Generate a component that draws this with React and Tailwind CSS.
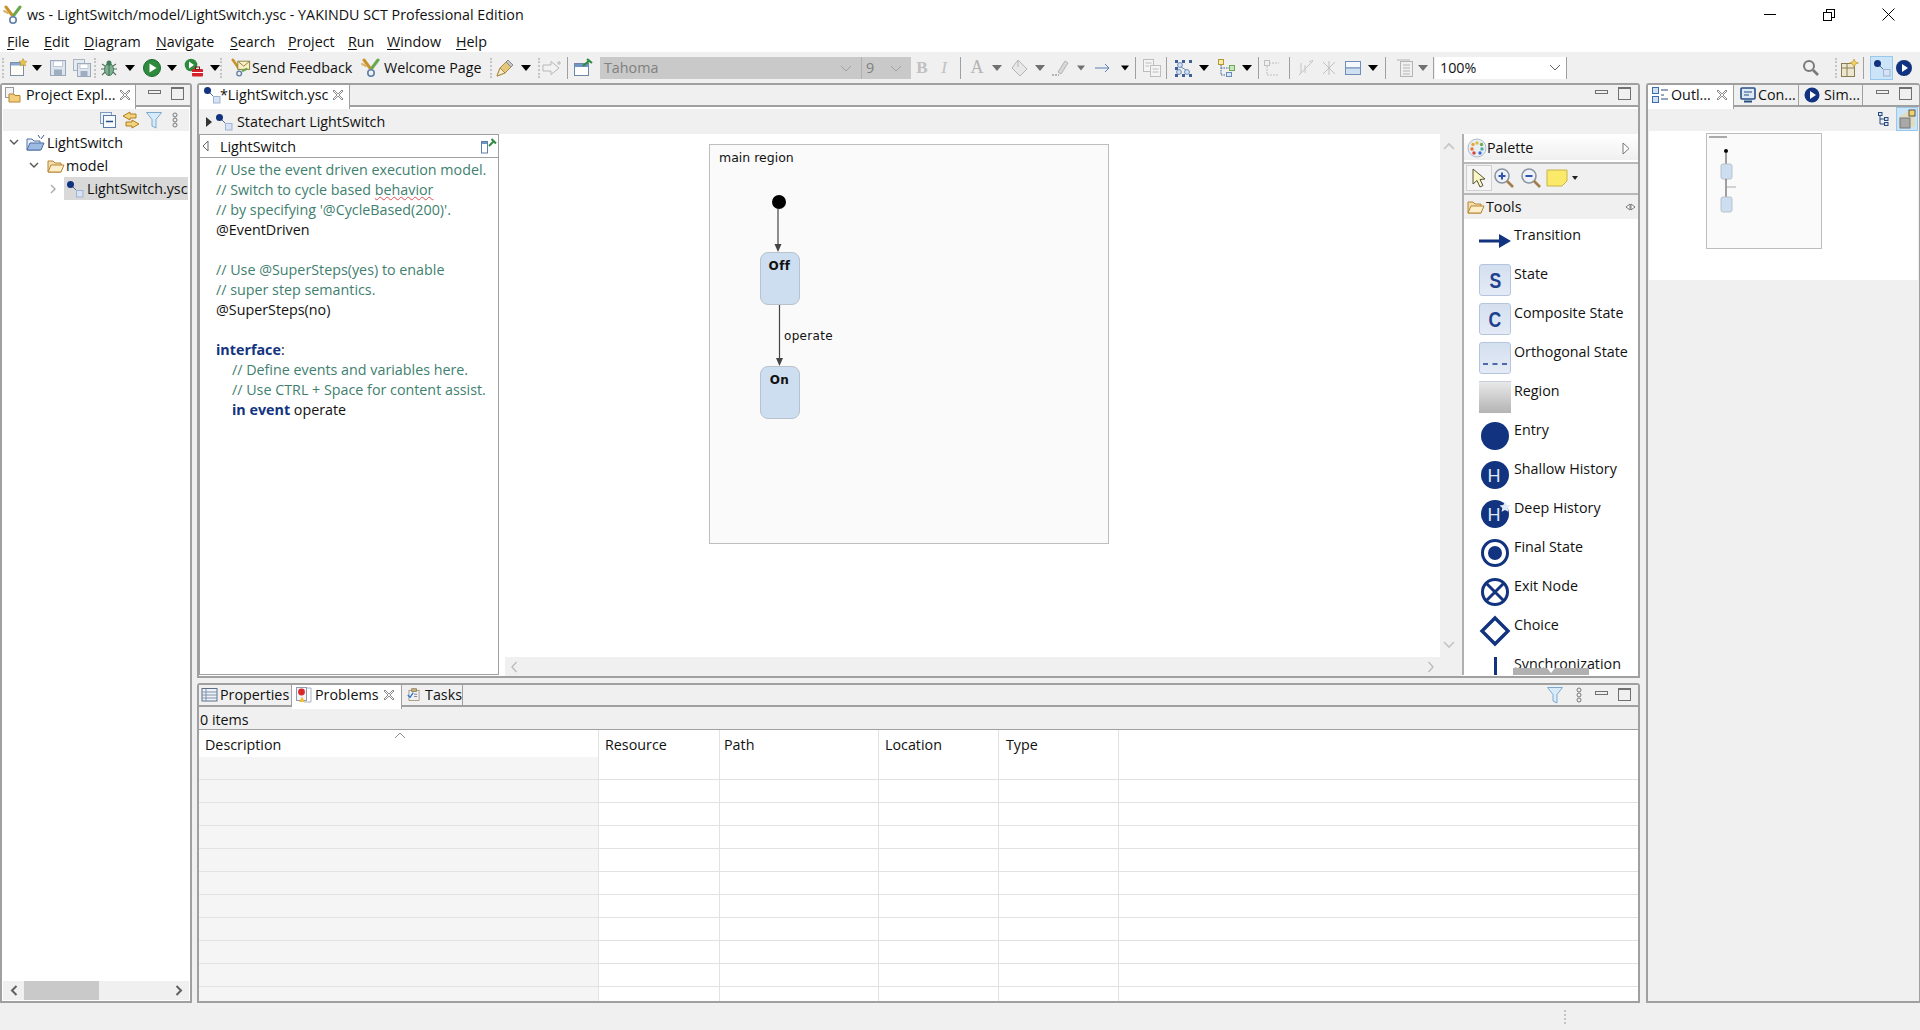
import React from "react";

const navy = "#12337f";

// small drawings used all over the workbench
const Logo = ({ size = 20 }) => (
  <svg width={size} height={size} viewBox="0 0 20 20">
    <path d="M3 2 L9 10" stroke="#c9932c" strokeWidth="3" strokeLinecap="round" />
    <path d="M17 2 L11 10" stroke="#6aa84f" strokeWidth="3" strokeLinecap="round" />
    <path d="M1 6 L5 8" stroke="#d9b36c" strokeWidth="2" strokeLinecap="round" />
    <circle cx="10" cy="15" r="3.2" fill="none" stroke="#5f7fa8" strokeWidth="1.6" />
  </svg>
);

const Ysc = ({ size = 18 }) => (
  <svg width={size} height={size} viewBox="0 0 18 18">
    <path d="M5 5 L12 12" stroke="#5a6a8a" strokeWidth="1" />
    <circle cx="4.5" cy="4.5" r="3.5" fill="#12337f" />
    <rect x="10.5" y="10.5" width="6.5" height="6.5" fill="#d7e3f4" stroke="#9fb4d0" />
  </svg>
);

const Arrow = ({ c = "#000" }) => (
  <svg width="10" height="6" viewBox="0 0 10 6">
    <path d="M0 0 H10 L5 6 Z" fill={c} />
  </svg>
);

const Grip = () => (
  <div className="w-[2px] h-[20px] border-l-2 border-dotted border-[#c4c4c4]" />
);

const Sep = () => <div className="w-px h-[22px] bg-[#a0a0a0]" />;

const Slot = ({ className, children }) => (
  <div className={"flex items-center justify-center shrink-0 h-full " + className}>{children}</div>
);

const NewIcon = () => (
  <svg width="20" height="20" viewBox="0 0 20 20">
    <rect x="2.5" y="4.5" width="13" height="13" fill="#fdfdf6" stroke="#7d8ea8" />
    <rect x="3" y="5" width="12" height="2.5" fill="#8aa7cf" />
    <path d="M15 0.5 L16.2 3 L19 3.4 L17 5.3 L17.5 8 L15 6.7 L12.5 8 L13 5.3 L11 3.4 L13.8 3 Z" fill="#e8c44c" stroke="#b48d23" strokeWidth=".5" />
  </svg>
);
const SaveIcon = () => (
  <svg width="18" height="20" viewBox="0 0 18 20">
    <rect x="1.5" y="2.5" width="15" height="15" fill="#dfe5ee" stroke="#9aa8bc" />
    <rect x="4.5" y="3" width="9" height="5.5" fill="#fff" stroke="#a9b5c6" strokeWidth=".7" />
    <rect x="5" y="11.5" width="8" height="5.5" fill="#9fadc0" />
  </svg>
);
const SaveAllIcon = () => (
  <svg width="20" height="20" viewBox="0 0 20 20">
    <rect x="1.5" y="1.5" width="11" height="11" fill="#e5e9f0" stroke="#a8b4c4" />
    <rect x="5.5" y="5.5" width="13" height="13" fill="#dfe5ee" stroke="#9aa8bc" />
    <rect x="8" y="6" width="8" height="4.5" fill="#fff" stroke="#a9b5c6" strokeWidth=".7" />
    <rect x="8.5" y="13" width="7" height="5" fill="#9fadc0" />
  </svg>
);
const BugIcon = () => (
  <svg width="20" height="20" viewBox="0 0 20 20">
    <path d="M3 6 L6 8 M17 6 L14 8 M2 11 H6 M18 11 H14 M3 17 L6 14 M17 17 L14 14" stroke="#5b6e5b" strokeWidth="1.1" />
    <ellipse cx="10" cy="11.5" rx="4.5" ry="6" fill="#7fb08f" stroke="#3f7a5a" />
    <circle cx="10" cy="5" r="2.5" fill="#3f7a5a" />
    <path d="M10 7 V17" stroke="#2f5f46" strokeWidth=".8" />
  </svg>
);
const RunIcon = () => (
  <svg width="20" height="20" viewBox="0 0 20 20">
    <circle cx="10" cy="10" r="8.5" fill="#2e8b3e" stroke="#1c6a2c" />
    <path d="M7.5 5.5 L14.5 10 L7.5 14.5 Z" fill="#fff" />
  </svg>
);
const ExtIcon = () => (
  <svg width="22" height="20" viewBox="0 0 22 20">
    <circle cx="7" cy="7" r="6.3" fill="#2e8b3e" />
    <path d="M5 3.5 L10 7 L5 10.5 Z" fill="#fff" />
    <rect x="8" y="11" width="11" height="7.5" rx="1" fill="#d6222a" />
    <rect x="11.5" y="9" width="4" height="2.5" fill="none" stroke="#8a1318" />
    <rect x="8" y="14" width="11" height="1" fill="#fff" />
  </svg>
);
const FeedbackIcon = () => (
  <svg width="22" height="20" viewBox="0 0 22 20">
    <path d="M2 1 L9 11" stroke="#c9932c" strokeWidth="3" strokeLinecap="round" />
    <circle cx="9" cy="16" r="2.6" fill="none" stroke="#5f7fa8" strokeWidth="1.5" />
    <rect x="7.5" y="2.5" width="13" height="9" fill="#f7f0c6" stroke="#8a7a3a" />
    <path d="M8 3 L14 8 L20 3" fill="none" stroke="#8a7a3a" />
    <path d="M13 13 L17 11" stroke="#6aa84f" strokeWidth="2.4" strokeLinecap="round" />
  </svg>
);
const PenIcon = () => (
  <svg width="20" height="20" viewBox="0 0 20 20">
    <path d="M2 18 L5 10 L13 2 L18 7 L10 15 Z" fill="#e6c77e" stroke="#a98a3f" />
    <path d="M5 10 L10 15 L2 18 Z" fill="#f6ead0" stroke="#a98a3f" />
    <path d="M13 2 L18 7 L16 9 L11 4 Z" fill="#c7c7c7" stroke="#8b8b8b" />
  </svg>
);
const ForwardIcon = () => (
  <svg width="22" height="20" viewBox="0 0 22 20">
    <path d="M2 7 H10 V3.5 L18 10 L10 16.5 V13 H2 Z" fill="#f2f2f2" stroke="#b7b7b7" />
    <path d="M18 3 V7 M16 5 H20" stroke="#b7b7b7" />
  </svg>
);
const EditorIcon = () => (
  <svg width="20" height="20" viewBox="0 0 20 20">
    <rect x="1.5" y="5.5" width="14" height="12" fill="#fff" stroke="#6f86a6" />
    <rect x="2" y="6" width="13" height="3" fill="#6f94c6" />
    <path d="M10 8 L17 2 M14 1 L19 5" stroke="#2f8a3f" strokeWidth="2.2" />
  </svg>
);
const PinPage = () => (
  <svg width="16" height="16" viewBox="0 0 16 16">
    <rect x=".5" y="3.5" width="6" height="11.5" fill="#fff" stroke="#5f7fa8" />
    <rect x="1" y="4" width="5" height="2" fill="#6f94c6" />
    <path d="M8 8 L13 3 M10.5 1 L15 5.5" stroke="#2f8a3f" strokeWidth="2" />
  </svg>
);
const SmallCopy = () => (
  <svg width="20" height="20" viewBox="0 0 20 20" fill="#f4f4f4" stroke="#bdbdbd">
    <rect x="1.5" y="1.5" width="10" height="12" />
    <rect x="8.5" y="7.5" width="10" height="11" />
    <path d="M3.5 5 H9.5 M3.5 8 H7 M10.5 11 H16.5 M10.5 14 H16.5" />
  </svg>
);
const LayoutIcon = () => (
  <svg width="20" height="20" viewBox="0 0 20 20">
    <path d="M2 2 h3 v3 h-3z M9 2 h3 v3 h-3z M16 2 h3 v3 h-3z M2 16 h3 v3 h-3z M9 16 h3 v3 h-3z M16 16 h3 v3 h-3z M2 9 h3 v3 h-3z" fill="#3d5f95" />
    <circle cx="7" cy="7" r="2.4" fill="#d6e3f3" stroke="#6a8abb" />
    <circle cx="6" cy="14" r="2.4" fill="#d6e3f3" stroke="#6a8abb" />
    <circle cx="14" cy="14" r="2.4" fill="#d6e3f3" stroke="#6a8abb" />
    <path d="M8 9 L13 12" stroke="#6a8abb" />
  </svg>
);
const TreeLayoutIcon = () => (
  <svg width="20" height="20" viewBox="0 0 20 20">
    <rect x="2.5" y="1.5" width="5" height="5" fill="#f7ecb0" stroke="#b8962b" />
    <rect x="13.5" y="7.5" width="5" height="5" fill="#c9e7b7" stroke="#6fa857" />
    <rect x="10.5" y="14.5" width="5" height="4" fill="#d9e6f5" stroke="#6a8abb" />
    <path d="M5 7 V17 H10 M5 10 H13" stroke="#3d5f95" strokeDasharray="1.5 1" fill="none" />
  </svg>
);

const MinMax = ({ gap = "ml-[10px]" }) => (
  <div className="flex items-start">
    <div className="w-[13px] h-[4px] border border-[#707070] mt-[5px]" />
    <div className={"w-[13px] h-[13px] border border-[#707070] border-t-2 mt-[2px] " + gap} />
  </div>
);

const CloseX = () => (
  <svg width="12" height="12" viewBox="0 0 12 12" fill="none" stroke="#8c8c8c">
    <path d="M2 1 L6 5 L10 1 L11 2 L7 6 L11 10 L10 11 L6 7 L2 11 L1 10 L5 6 L1 2 Z" />
  </svg>
);

const Chain = () => (
  <svg width="8" height="16" viewBox="0 0 8 16" fill="none" stroke="#777">
    <circle cx="4" cy="3" r="2" />
    <circle cx="4" cy="8" r="2" />
    <circle cx="4" cy="13" r="2" />
  </svg>
);

const Funnel = () => (
  <svg width="18" height="18" viewBox="0 0 18 18">
    <path d="M1.5 1.5 H16.5 L11 8.5 V17 L7 15 V8.5 Z" fill="#d8ebfa" stroke="#7ea9cf" />
  </svg>
);

const Folder = ({ color = "#b88432" }) => (
  <svg width="18" height="16" viewBox="0 0 18 16">
    <path d="M1 3 H6 L8 5 H14 V14 H1 Z" fill="#f3dfae" stroke={color} />
    <path d="M1 14 L4 7 H17 L14 14 Z" fill="#fbeecb" stroke={color} />
  </svg>
);

const Tab = ({ w, active, children }) => (
  <div
    className={
      "flex items-center shrink-0 border-r border-[#a0a0a0] whitespace-nowrap " +
      (active ? "bg-white -mb-[2px] h-[24px] pb-[4px] z-10 " : "h-[22px] pb-[2px] ") +
      w
    }
  >
    {children}
  </div>
);

function Toolbar() {
  return (
    <div className="h-[31px] flex items-center bg-[#f0f0f0] shrink-0">
      <Slot className="w-[5px]"><Grip /></Slot>
      <Slot className="w-[25px]"><NewIcon /></Slot>
      <Slot className="w-[14px]"><Arrow /></Slot>
      <Slot className="w-[28px]"><SaveIcon /></Slot>
      <Slot className="w-[20px]"><SaveAllIcon /></Slot>
      <Slot className="w-[6px]"><Grip /></Slot>
      <Slot className="w-[22px]"><BugIcon /></Slot>
      <Slot className="w-[20px]"><Arrow /></Slot>
      <Slot className="w-[24px]"><RunIcon /></Slot>
      <Slot className="w-[16px]"><Arrow /></Slot>
      <Slot className="w-[30px]"><ExtIcon /></Slot>
      <Slot className="w-[10px]"><Arrow /></Slot>
      <Slot className="w-[2px]"><Grip /></Slot>
      <Slot className="w-[20px] ml-[9px]"><FeedbackIcon /></Slot>
      <div className="w-[100px] ml-[1px] pt-[1px] whitespace-nowrap">Send Feedback</div>
      <Slot className="w-[20px] ml-[9px]"><Logo /></Slot>
      <div className="w-[97px] ml-[3px] pt-[1px] whitespace-nowrap">Welcome Page</div>
      <Slot className="w-[4px] ml-[8px]"><Grip /></Slot>
      <Slot className="w-[20px] ml-[2px]"><PenIcon /></Slot>
      <Slot className="w-[22px]"><Arrow /></Slot>
      <Slot className="w-[4px]"><Grip /></Slot>
      <Slot className="w-[22px]"><ForwardIcon /></Slot>
      <Slot className="w-[8px]"><Sep /></Slot>
      <Slot className="w-[24px]"><EditorIcon /></Slot>
      <div className="ml-[5px] w-[262px] h-[22px] bg-[#c9c9c9] flex items-center justify-between pl-[4px] pr-[9px] pt-[1px] text-[#808080] border-r border-[#b0b0b0]">
        <span>Tahoma</span>
        <svg width="12" height="7" viewBox="0 0 12 7" fill="none" stroke="#a0a0a0"><path d="M1 1 L6 6 L11 1" /></svg>
      </div>
      <div className="w-[49px] h-[22px] bg-[#c9c9c9] flex items-center justify-between pl-[4px] pr-[9px] pt-[1px] text-[#808080]">
        <span>9</span>
        <svg width="12" height="7" viewBox="0 0 12 7" fill="none" stroke="#a0a0a0"><path d="M1 1 L6 6 L11 1" /></svg>
      </div>
      <Slot className="w-[22px] font-['Liberation_Serif',serif] font-bold text-[17px] text-[#c0c0c0]">B</Slot>
      <Slot className="w-[22px] font-['Liberation_Serif',serif] italic text-[17px] text-[#c0c0c0]">I</Slot>
      <Slot className="w-[10px]"><Sep /></Slot>
      <Slot className="w-[24px] font-['Liberation_Serif',serif] text-[18px] text-[#b4b4b4]">A</Slot>
      <Slot className="w-[16px]"><Arrow c="#707070" /></Slot>
      <Slot className="w-[30px]">
        <svg width="20" height="20" viewBox="0 0 20 20"><path d="M8 2 L17 11 L10 18 L2 10 Z" fill="#e8e8e8" stroke="#b4b4b4" /><path d="M8 2 V9" stroke="#b4b4b4" /></svg>
      </Slot>
      <Slot className="w-[10px]"><Arrow c="#707070" /></Slot>
      <Slot className="w-[32px]">
        <svg width="20" height="20" viewBox="0 0 20 20"><path d="M7 14 L14 3 L17 5 L10 16 Z" fill="#d8d8d8" stroke="#b4b4b4" /><path d="M1 17 H8" stroke="#b4b4b4" strokeDasharray="2 1" strokeWidth="2" /></svg>
      </Slot>
      <Slot className="w-[8px]"><Arrow c="#707070" /></Slot>
      <Slot className="w-[36px]">
        <svg width="16" height="10" viewBox="0 0 16 10" fill="none" stroke="#5a7fb0"><path d="M0 5 H14 M10 1 L14 5 L10 9" /></svg>
      </Slot>
      <Slot className="w-[8px]"><Arrow /></Slot>
      <Slot className="w-[12px]"><Sep /></Slot>
      <Slot className="w-[22px]"><SmallCopy /></Slot>
      <Slot className="w-[6px]"><Sep /></Slot>
      <Slot className="w-[28px]"><LayoutIcon /></Slot>
      <Slot className="w-[14px]"><Arrow /></Slot>
      <Slot className="w-[30px]"><TreeLayoutIcon /></Slot>
      <Slot className="w-[12px]"><Arrow /></Slot>
      <Slot className="w-[10px]"><Sep /></Slot>
      <Slot className="w-[18px]">
        <svg width="18" height="18" viewBox="0 0 18 18" fill="none" stroke="#c0c0c0"><rect x="1.5" y="1.5" width="5" height="5" /><path d="M6 4 H16 M4 7 V16 H16" strokeDasharray="2 1" /></svg>
      </Slot>
      <Slot className="w-[16px]"><Sep /></Slot>
      <Slot className="w-[18px]">
        <svg width="18" height="18" viewBox="0 0 18 18" fill="none" stroke="#c4c4c4"><path d="M4 4 V14 M8 6 V14 M12 3 L16 1 M2 16 L16 2" /></svg>
      </Slot>
      <Slot className="w-[28px]">
        <svg width="18" height="18" viewBox="0 0 18 18" fill="none" stroke="#c0c0c0"><path d="M3 3 L15 15 M15 3 L3 15 M9 2 V16" /></svg>
      </Slot>
      <Slot className="w-[20px]">
        <svg width="18" height="18" viewBox="0 0 18 18"><rect x="1.5" y="2.5" width="15" height="6.5" fill="#f5f8fc" stroke="#6f8db5" /><rect x="1.5" y="9" width="15" height="6.5" fill="#cfe0f2" stroke="#6f8db5" /></svg>
      </Slot>
      <Slot className="w-[20px]"><Arrow /></Slot>
      <Slot className="w-[4px]"><Sep /></Slot>
      <Slot className="w-[20px] ml-[8px]">
        <svg width="18" height="20" viewBox="0 0 18 20" fill="none" stroke="#b4b4b4"><rect x="4.5" y="3.5" width="12" height="15" fill="#f0f0f0" /><path d="M1 2 H14 M7 7 H14 M7 10 H14 M7 13 H14 M7 16 H14" /></svg>
      </Slot>
      <Slot className="w-[16px]"><Arrow c="#707070" /></Slot>
      <Slot className="w-[4px]"><Sep /></Slot>
      <div className="w-[132px] h-[22px] bg-white flex items-center justify-between pl-[5px] pr-[5px] border-r border-[#a0a0a0]">
        <span>100%</span>
        <svg width="12" height="7" viewBox="0 0 12 7" fill="none" stroke="#606060"><path d="M1 1 L6 6 L11 1" /></svg>
      </div>
      <div className="ml-auto flex items-center h-full">
        <Slot className="w-[24px]">
          <svg width="18" height="18" viewBox="0 0 18 18" fill="none" stroke="#7a7a7a"><circle cx="7" cy="7" r="5" strokeWidth="2" /><path d="M11 11 L16 16" strokeWidth="2.6" /></svg>
        </Slot>
        <Slot className="w-[4px] ml-[11px]"><Grip /></Slot>
        <Slot className="w-[20px] ml-[1px]">
          <svg width="20" height="20" viewBox="0 0 20 20"><rect x="2.5" y="5.5" width="13" height="13" fill="#eee7cf" stroke="#8a7d55" /><path d="M2.5 10 H15.5 M8 5.5 V18.5" stroke="#8a7d55" /><path d="M15 1 L16.5 4 L19.5 5 L16.5 6 L15 9 L13.5 6 L10.5 5 L13.5 4 Z" fill="#f3d26c" stroke="#b48d23" strokeWidth=".6" /></svg>
        </Slot>
        <div className="w-px h-[22px] bg-[#a0a0a0] ml-[4px]" />
        <div className="w-[23px] h-[24px] ml-[6px] bg-[#cce4f7] border border-[#99c8ee] flex items-center justify-center"><Ysc /></div>
        <Slot className="w-[20px] ml-[1px]">
          <svg width="18" height="18" viewBox="0 0 18 18"><circle cx="9" cy="9" r="8" fill={navy} /><path d="M7 5 L13 9 L7 13 Z" fill="#fff" /></svg>
        </Slot>
        <div className="w-[6px]" />
      </div>
    </div>
  );
}

function ProjectExplorer() {
  return (
    <div className="w-[192px] shrink-0 h-full border-2 border-[#a0a0a0] rounded-t-[3px] bg-white flex flex-col">
      <div className="h-[22px] shrink-0 flex bg-[#f0f0f0] border-b-2 border-[#a0a0a0]">
        <Tab w="w-[134px] pl-[2px]" active>
          <svg width="18" height="18" viewBox="0 0 18 18"><rect x="1.5" y="1.5" width="8" height="10" fill="#f4f4f4" stroke="#999" /><path d="M5 8 H10 L11 9.5 H16 V16 H5 Z" fill="#f3cf7c" stroke="#b88432" /></svg>
          <span className="ml-[4px]">Project Expl...</span>
          <span className="ml-[4px]"><CloseX /></span>
        </Tab>
        <div className="pl-[12px]"><MinMax /></div>
      </div>
      <div className="h-[22px] shrink-0 mt-[2px] mx-px bg-[#f0f0f0] flex items-center pl-[96px]">
        <svg width="18" height="18" viewBox="0 0 18 18"><rect x="1.5" y="1.5" width="11" height="11" fill="#eaf1f9" stroke="#7f9cc0" /><rect x="4.5" y="4.5" width="12" height="12" fill="#f7fafd" stroke="#587aa6" /><path d="M7 10.5 H14" stroke="#264f86" strokeWidth="1.5" /></svg>
        <svg className="ml-[5px]" width="18" height="18" viewBox="0 0 18 18" fill="#f3d37c" stroke="#b07f1e"><path d="M8 1 L1 5 L8 9 V7 H14 V3 H8 Z" /><path d="M10 9 L17 13 L10 17 V15 H4 V11 H10 Z" /></svg>
        <span className="ml-[5px]"><Funnel /></span>
        <span className="ml-[8px]"><Chain /></span>
      </div>
      <div className="flex-1">
        <div className="h-[23px] flex items-center pl-[7px]">
          <svg width="10" height="7" viewBox="0 0 10 7" fill="none" stroke="#555" strokeWidth="1.4"><path d="M1 1 L5 5 L9 1" /></svg>
          <span className="ml-[7px]">
            <svg width="20" height="18" viewBox="0 0 20 18"><path d="M1 5 H6 L8 7 H14 V16 H1 Z" fill="#e9eff8" stroke="#4d6ea3" /><path d="M1 16 L4 9 H18 L15 16 Z" fill="#9dbbe2" stroke="#4d6ea3" /><path d="M12 1 L14 4 M18 1 L15 5" stroke="#3c5a8c" /></svg>
          </span>
          <span className="ml-[1px]">LightSwitch</span>
        </div>
        <div className="h-[23px] flex items-center pl-[27px]">
          <svg width="10" height="7" viewBox="0 0 10 7" fill="none" stroke="#555" strokeWidth="1.4"><path d="M1 1 L5 5 L9 1" /></svg>
          <span className="ml-[8px]"><Folder /></span>
          <span className="ml-[1px]">model</span>
        </div>
        <div className="h-[23px] flex items-center pl-[48px]">
          <svg width="7" height="10" viewBox="0 0 7 10" fill="none" stroke="#aaa" strokeWidth="1.4"><path d="M1 1 L5 5 L1 9" /></svg>
          <div className="ml-[7px] h-full w-[124px] bg-[#d9d9d9] flex items-center pl-[2px] overflow-hidden">
            <Ysc />
            <span className="ml-[3px] whitespace-nowrap">LightSwitch.ysc</span>
          </div>
        </div>
      </div>
      <div className="h-[19px] shrink-0 mb-[1px] mx-px bg-[#f0f0f0] flex items-center">
        <div className="w-[21px] flex justify-center">
          <svg width="8" height="11" viewBox="0 0 8 11" fill="none" stroke="#606060" strokeWidth="2"><path d="M6.5 1 L2 5.5 L6.5 10" /></svg>
        </div>
        <div className="w-[75px] h-full bg-[#c9c9c9]" />
        <div className="ml-auto w-[21px] flex justify-center">
          <svg width="8" height="11" viewBox="0 0 8 11" fill="none" stroke="#606060" strokeWidth="2"><path d="M1.5 1 L6 5.5 L1.5 10" /></svg>
        </div>
      </div>
    </div>
  );
}

const defLines = [
  { c: "// Use the event driven execution model." },
  { c: "// Switch to cycle based ", sq: "behavior" },
  { c: "// by specifying '@CycleBased(200)'." },
  { t: "@EventDriven" },
  {},
  { c: "// Use @SuperSteps(yes) to enable" },
  { c: "// super step semantics." },
  { t: "@SuperSteps(no)" },
  {},
  { k: "interface", t: ":" },
  { c: "// Define events and variables here.", i: true },
  { c: "// Use CTRL + Space for content assist.", i: true },
  { k: "in event", t: " operate", i: true },
];

function Definition() {
  return (
    <div className="w-[300px] shrink-0 h-[541px] border border-[#a0a0a0] bg-white flex flex-col">
      <div className="h-[23px] shrink-0 border-b border-[#a0a0a0] flex items-center pl-[2px] pr-[1px]">
        <svg width="7" height="12" viewBox="0 0 7 12" fill="#fff" stroke="#666"><path d="M6 1 L1 6 L6 11 Z" /></svg>
        <span className="ml-[11px] pt-[2px]">LightSwitch</span>
        <span className="ml-auto"><PinPage /></span>
      </div>
      <div className="pl-[16px] pt-[2px] whitespace-pre">
        {defLines.map((l, i) => (
          <div key={i} className={"h-[20px] leading-[20px] " + (l.i ? "pl-[16px]" : "")}>
            {l.c && <span className="text-[#3f7f6f]">{l.c}</span>}
            {l.sq && <span className="text-[#3f7f6f] underline decoration-wavy decoration-[#e05050] decoration-1">{l.sq}</span>}
            {l.k && <span className="text-[#12337f] font-bold">{l.k}</span>}
            {l.t && <span>{l.t}</span>}
          </div>
        ))}
      </div>
    </div>
  );
}

function Diagram() {
  const state = "absolute w-[40px] h-[53px] rounded-[8px] bg-[#cddef0] border border-[#b8c2cc] text-center pr-[1px] font-bold text-[12px] leading-[26px] font-['DejaVu_Sans',sans-serif] tracking-[.4px]";
  return (
    <div className="relative flex-1 bg-white">
      {/* free canvas: offsets are relative to the canvas corner */}
      <div className="absolute left-[210px] top-[10px] w-[400px] h-[400px] bg-[#fafafa] border border-[#bdbdbd] font-['DejaVu_Sans',sans-serif] text-[12.5px]">
        <span className="absolute left-[9px] top-[4px] whitespace-nowrap">main region</span>
        <svg className="absolute left-0 top-0" width="398" height="398">
          <circle cx="69" cy="57" r="7" fill="#000" />
          <path d="M68 64 V100" stroke="#444" strokeWidth="1.2" />
          <path d="M64.5 99 H71.5 L68 107 Z" fill="#444" />
          <path d="M69.5 159 V214" stroke="#444" strokeWidth="1.2" />
          <path d="M66 213 H73 L69.5 221 Z" fill="#444" />
        </svg>
        <div className={state + " left-[50px] top-[107px]"}>Off</div>
        <div className={state + " left-[50px] top-[221px]"}>On</div>
        <span className="absolute left-[74px] top-[182px] text-[12px] tracking-[.3px] whitespace-nowrap">operate</span>
      </div>
    </div>
  );
}

function PaletteIcon({ name }) {
  const box = "w-[32px] h-[32px] rounded-[3px] border border-[#b5c5dd] bg-linear-to-b from-[#d4dfef] to-[#e4ebf6] flex items-center justify-center font-['Liberation_Sans',sans-serif] font-bold text-[22px] text-[#1f3f8f]";
  switch (name) {
    case "Transition":
      return (
        <svg width="32" height="32" viewBox="0 0 32 32"><path d="M0 14.5 H20 V9 L32 16 L20 23 V17.5 H0 Z" fill={navy} /></svg>
      );
    case "State":
      return <div className={box}><span className="scale-x-[.8]">S</span></div>;
    case "Composite State":
      return <div className={box}><span className="scale-x-[.8]">C</span></div>;
    case "Orthogonal State":
      return (
        <div className={box}>
          <svg width="24" height="4" viewBox="0 0 24 4" className="mt-[12px]"><path d="M0 2 H24" stroke="#1f3f8f" strokeWidth="1.6" strokeDasharray="5 4.5" /></svg>
        </div>
      );
    case "Region":
      return <div className="w-[32px] h-[32px] bg-linear-to-b from-[#e8e8e8] to-[#b4b4b4] border-t border-[#c5cede]" />;
    case "Entry":
      return <svg width="32" height="32"><circle cx="16" cy="16" r="14" fill={navy} /></svg>;
    case "Shallow History":
    case "Deep History":
      return (
        <svg width="32" height="32">
          <circle cx="16" cy="16" r="14" fill={navy} />
          <text x="15" y="22.5" textAnchor="middle" fill="#dfe8f5" fontSize="18" fontWeight="400" fontFamily="Liberation Sans">H</text>
          {name === "Deep History" && <path d="M26 3.5 L27.7 7 L31.5 7.5 L28.7 10 L29.4 13.7 L26 12 L22.6 13.7 L23.3 10 L20.5 7.5 L24.3 7 Z" fill="#dfe8f5" />}
        </svg>
      );
    case "Final State":
      return (
        <svg width="32" height="32" fill="none"><circle cx="16" cy="16" r="12.5" stroke={navy} strokeWidth="3" /><circle cx="16" cy="16" r="7" fill={navy} /></svg>
      );
    case "Exit Node":
      return (
        <svg width="32" height="32" fill="none" stroke={navy} strokeWidth="3"><circle cx="16" cy="16" r="12.5" /><path d="M7 7 L25 25 M25 7 L7 25" /></svg>
      );
    case "Choice":
      return (
        <svg width="32" height="32" fill="none" stroke={navy} strokeWidth="3.4"><path d="M16 3 L29 16 L16 29 L3 16 Z" /></svg>
      );
    default:
      return <div className="w-[3px] h-[20px] bg-[#12337f] mx-auto mt-[3px]" />;
  }
}

const tools = ["Transition", "State", "Composite State", "Orthogonal State", "Region", "Entry", "Shallow History", "Deep History", "Final State", "Exit Node", "Choice", "Synchronization"];

function Palette() {
  return (
    <div className="w-[176px] shrink-0 h-[541px] bg-white border-l-2 border-[#b0b0b0] flex flex-col relative overflow-hidden">
      <div className="h-[26px] shrink-0 pt-[2px] bg-linear-to-b from-white to-[#f0f0f0] flex items-center pl-[3px] pr-[8px]">
        <svg width="20" height="20" viewBox="0 0 20 20">
          <circle cx="10" cy="10" r="9" fill="#e8eef6" stroke="#aeb9c8" />
          <circle cx="6" cy="6.5" r="1.7" fill="#e8a33a" /><circle cx="10" cy="5" r="1.7" fill="#d9c23a" /><circle cx="14.5" cy="6.5" r="1.7" fill="#6fae4a" />
          <circle cx="5" cy="11" r="1.7" fill="#e8742a" /><circle cx="15" cy="11" r="1.7" fill="#4ab0a0" />
          <circle cx="7" cy="15" r="1.7" fill="#d8403a" /><circle cx="13" cy="15" r="1.7" fill="#3a6fd8" />
        </svg>
        <span className="ml-[0px]">Palette</span>
        <svg className="ml-auto" width="8" height="13" viewBox="0 0 8 13" fill="#fff" stroke="#777"><path d="M1 1 L7 6.5 L1 12 Z" /></svg>
      </div>
      <div className="h-[33px] shrink-0 mt-[2px] bg-[#f0f0f0] border-y-2 border-[#b8b8b8] flex items-center pl-[2px] pb-[1px]">
        <div className="w-[26px] h-[26px] bg-[#f5f5f5] border border-[#d0d0d0] flex items-center justify-center">
          <svg width="16" height="20" viewBox="0 0 16 20"><path d="M2 1 V16 L6 12.5 L9 19 L12 17.5 L9 11.5 L14 11 Z" fill="#fbf6c4" stroke="#55553a" /></svg>
        </div>
        <svg className="ml-[1px]" width="22" height="22" viewBox="0 0 22 22" fill="none"><circle cx="9" cy="9" r="7" fill="#eef2f8" stroke="#8a94a3" strokeWidth="1.6" /><path d="M5.5 9 H12.5 M9 5.5 V12.5" stroke="#2f54b0" strokeWidth="2" /><path d="M14 14 L20 20" stroke="#a57d4a" strokeWidth="2.6" /></svg>
        <svg className="ml-[5px]" width="22" height="22" viewBox="0 0 22 22" fill="none"><circle cx="9" cy="9" r="7" fill="#eef2f8" stroke="#8a94a3" strokeWidth="1.6" /><path d="M5.5 9 H12.5" stroke="#2f54b0" strokeWidth="2" /><path d="M14 14 L20 20" stroke="#a57d4a" strokeWidth="2.6" /></svg>
        <svg className="ml-[4px]" width="22" height="18" viewBox="0 0 22 18"><path d="M1 1 H21 V12 L16 17 H1 Z" fill="#fbe96a" stroke="#c7b44a" /></svg>
        <svg className="ml-[4px]" width="6" height="4" viewBox="0 0 6 4"><path d="M0 0 H6 L3 4 Z" fill="#222" /></svg>
      </div>
      <div className="h-[24px] shrink-0 bg-[#f0f0f0] flex items-center pl-[3px] pr-[2px]">
        <Folder />
        <span className="ml-[1px]">Tools</span>
        <svg className="ml-auto" width="11" height="8" viewBox="0 0 11 8" fill="#fff" stroke="#777"><path d="M5 1 L1 4 L5 7 Z M6 1 L10 4 L6 7 Z" /></svg>
      </div>
      <div className="pt-[6px]">
        {tools.map((t) => (
          <div key={t} className="h-[39px] flex items-start pl-[15px]">
            <div className="w-[32px] h-[32px] shrink-0"><PaletteIcon name={t} /></div>
            <span className="ml-[3px] -mt-[1px] whitespace-nowrap">{t}</span>
          </div>
        ))}
      </div>
      {/* drawer scroll handle lying over the last tool */}
      <div className="absolute left-[49px] bottom-0 w-[76px] h-[7px] bg-[#b0b0b0] flex justify-center">
        <svg width="8" height="5" viewBox="0 0 8 5"><path d="M0 0 H8 L4 5 Z" fill="#fff" /></svg>
      </div>
    </div>
  );
}

function EditorPanel() {
  return (
    <div className="h-[595px] shrink-0 border-2 border-[#a0a0a0] rounded-t-[3px] bg-white flex flex-col">
      <div className="h-[22px] shrink-0 flex bg-[#f0f0f0] border-b-2 border-[#a0a0a0]">
        <Tab w="w-[151px] pl-[4px]" active>
          <Ysc />
          <span className="-ml-[1px]">*LightSwitch.ysc</span>
          <span className="ml-[4px]"><CloseX /></span>
        </Tab>
        <div className="ml-auto pr-[7px]"><MinMax /></div>
      </div>
      <div className="h-[25px] shrink-0 mt-[2px] bg-[#f0f0f0] flex items-center pl-[7px]">
        <svg width="6" height="10" viewBox="0 0 6 10"><path d="M0 0 L6 5 L0 10 Z" fill="#333" /></svg>
        <span className="ml-[3px]"><Ysc /></span>
        <span className="ml-[4px]">Statechart LightSwitch</span>
      </div>
      <div className="flex-1 flex min-h-0">
        <Definition />
        <div className="flex-1 flex flex-col">
          <Diagram />
          <div className="h-[19px] shrink-0 ml-[6px] bg-[#f0f0f0] flex items-center justify-between px-[5px]">
            <svg width="8" height="12" viewBox="0 0 8 12" fill="none" stroke="#bdbdbd" strokeWidth="1.4"><path d="M6.5 1 L2 6 L6.5 11" /></svg>
            <svg width="8" height="12" viewBox="0 0 8 12" fill="none" stroke="#bdbdbd" strokeWidth="1.4"><path d="M1.5 1 L6 6 L1.5 11" /></svg>
          </div>
        </div>
        <div className="w-[22px] shrink-0 bg-[#f0f0f0] flex flex-col items-center justify-between pt-[8px] pb-[27px] pr-[4px]">
          <svg width="12" height="8" viewBox="0 0 12 8" fill="none" stroke="#c4c4c4" strokeWidth="1.6"><path d="M1 7 L6 2 L11 7" /></svg>
          <svg width="12" height="8" viewBox="0 0 12 8" fill="none" stroke="#c4c4c4" strokeWidth="1.6"><path d="M1 1 L6 6 L11 1" /></svg>
        </div>
        <Palette />
      </div>
    </div>
  );
}

const cols = ["w-[400px]", "w-[121px]", "w-[159px]", "w-[120px]", "w-[120px]"];
const heads = ["Description", "Resource", "Path", "Location", "Type"];
const headPads = ["pl-[6px]", "pl-[6px]", "pl-[4px]", "pl-[6px]", "pl-[7px]"];

function ProblemsPanel() {
  return (
    <div className="h-[320px] mt-[5px] shrink-0 border-2 border-[#a0a0a0] rounded-t-[3px] bg-white flex flex-col overflow-hidden">
      <div className="h-[22px] shrink-0 flex bg-[#f0f0f0] border-b-2 border-[#a0a0a0]">
        <Tab w="w-[93px] pl-[2px]">
          <svg width="18" height="16" viewBox="0 0 18 16"><rect x="1" y="1.5" width="15" height="12.5" fill="#eef2f7" stroke="#5c6e88" /><path d="M1 5 H16 M1 8 H16 M1 11 H16 M5 2 V14" stroke="#7f91aa" /></svg>
          <span className="ml-[1px]">Properties</span>
        </Tab>
        <Tab w="w-[110px] pl-[3px]" active>
          <svg width="18" height="18" viewBox="0 0 18 18"><rect x="1.5" y="1.5" width="10" height="13" fill="#f2f4f8" stroke="#8e9bb0" /><path d="M12 2 H16 V16 H9" fill="none" stroke="#aab4c4" /><circle cx="6.5" cy="6" r="3.4" fill="#d92a2a" /><path d="M4 16 L7 10.5 L10 16 Z" fill="#f0bc3c" /></svg>
          <span className="ml-[2px]">Problems</span>
          <span className="ml-[5px]"><CloseX /></span>
        </Tab>
        <Tab w="w-[61px] pl-[5px]">
          <svg width="18" height="18" viewBox="0 0 18 18"><rect x="2.5" y="3" width="13" height="13" fill="#eef2f7" stroke="#a08a60" /><rect x="6" y="1" width="6" height="3.5" fill="#c7b48a" stroke="#8a7548" /><path d="M1 9 L4 12 L8 6" fill="none" stroke="#2a6fc9" strokeWidth="1.6" /><path d="M9 8 H13 M9 11 H13" stroke="#667" /></svg>
          <span className="ml-[4px]">Tasks</span>
        </Tab>
        <div className="ml-auto flex items-start pr-[7px] pt-[1px]">
          <span className="mr-[11px]"><Funnel /></span>
          <span className="mr-[12px] mt-[1px]"><Chain /></span>
          <MinMax />
        </div>
      </div>
      <div className="h-[23px] shrink-0 bg-[#f0f0f0] flex items-center pl-[1px] pt-[3px] border-b border-[#a0a0a0]">0 items</div>
      <div className="flex-1 relative">
        <svg className="absolute left-[195px] top-[2px]" width="12" height="7" viewBox="0 0 12 7" fill="none" stroke="#909090"><path d="M1 6 L6 1 L11 6" /></svg>
        <div className="flex h-[50px] border-b border-[#e2e2e2]">
          {heads.map((h, i) => (
            <div key={h} className={"border-r border-[#e2e2e2] h-full " + cols[i] + " " + headPads[i]}>
              <div className="h-[27px] flex items-center pt-[2px]">{h}</div>
              {i === 0 && <div className="h-[22px] -ml-[6px] bg-[#f5f5f5]" />}
            </div>
          ))}
        </div>
        {Array.from({ length: 10 }, (_, r) => (
          <div key={r} className="flex h-[23px] border-b border-[#e2e2e2]">
            {cols.map((c, i) => (
              <div key={i} className={"border-r border-[#e2e2e2] h-full " + c + (i === 0 ? " bg-[#f5f5f5]" : "")} />
            ))}
          </div>
        ))}
      </div>
    </div>
  );
}

function OutlinePanel() {
  return (
    <div className="flex-1 h-full border-2 border-r border-[#a0a0a0] rounded-t-[3px] bg-[#f0f0f0] flex flex-col min-w-0">
      <div className="h-[22px] shrink-0 flex border-b-2 border-[#a0a0a0]">
        <Tab w="w-[86px] pl-[3px]" active>
          <svg width="18" height="18" viewBox="0 0 18 18"><rect x="1.5" y="1.5" width="6" height="6" fill="#cfe0f5" stroke="#3d6cab" /><rect x="1.5" y="10.5" width="6" height="6" fill="#cfe0f5" stroke="#3d6cab" /><path d="M10 4 H17 M10 9 H13 M10 13 H17" stroke="#2a4a7a" /></svg>
          <span className="ml-[2px]">Outl...</span>
          <span className="ml-[5px]"><CloseX /></span>
        </Tab>
        <Tab w="w-[65px] pl-[6px]">
          <svg width="16" height="18" viewBox="0 0 16 18"><rect x="1" y="2" width="14" height="11" rx="1" fill="#dfe8f5" stroke="#264f86" strokeWidth="1.6" /><path d="M4 6 H12 M4 9 H9" stroke="#264f86" /><rect x="4" y="14.5" width="8" height="2" fill="#264f86" /></svg>
          <span className="ml-[2px]">Con...</span>
        </Tab>
        <Tab w="w-[64px] pl-[5px]">
          <svg width="16" height="16" viewBox="0 0 16 16"><circle cx="8" cy="8" r="7.5" fill="#12337f" /><path d="M6 4 L12 8 L6 12 Z" fill="#fff" /></svg>
          <span className="ml-[4px]">Sim...</span>
        </Tab>
        <div className="ml-auto pr-[7px]"><MinMax /></div>
      </div>
      <div className="h-[24px] shrink-0 flex items-center justify-end pr-px">
        <svg width="14" height="16" viewBox="0 0 14 16" fill="#d7e3f4" stroke="#2a4a7a"><rect x="1.5" y="1.5" width="3.5" height="3" /><rect x="7.5" y="6.5" width="3.5" height="3" /><rect x="7.5" y="11.5" width="3.5" height="3" /><path d="M3 5 V13 H7 M3 8 H7" fill="none" /></svg>
        <div className="ml-[5px] w-[22px] h-[24px] bg-[#cce4f7] border border-[#99c8ee] flex items-center justify-center">
          <svg width="18" height="20" viewBox="0 0 18 20"><path d="M1 8 L12 1 H17 V18 H1 Z" fill="#e0dcc0" /><rect x="2" y="9" width="10" height="10" fill="#a8a8a8" stroke="#777" /><rect x="11" y="1" width="6" height="6" fill="#f3d26c" stroke="#555" /></svg>
        </div>
      </div>
      <div className="h-[149px] shrink-0 mx-px bg-white pl-[57px] pt-[2px]">
        <svg width="116" height="116" viewBox="0 0 116 116">
          <rect x=".5" y=".5" width="115" height="115" fill="#fafafa" stroke="#bdbdbd" />
          <rect x="3" y="3" width="18" height="2" fill="#aaa" />
          <circle cx="20" cy="18" r="2" fill="#000" />
          <path d="M20 19 V31" stroke="#444" />
          <rect x="15" y="31" width="11" height="15" rx="2" fill="#cddef0" stroke="#b8c2cc" />
          <path d="M20 46 V64" stroke="#444" />
          <path d="M21 54 H30" stroke="#aaa" />
          <rect x="15" y="64" width="11" height="15" rx="2" fill="#cddef0" stroke="#b8c2cc" />
        </svg>
      </div>
    </div>
  );
}

export default function App() {
  const menus = [
    ["File", "w-[44px] pl-[7px]"],
    ["Edit", "w-[40px]"],
    ["Diagram", "w-[72px]"],
    ["Navigate", "w-[74px]"],
    ["Search", "w-[58px]"],
    ["Project", "w-[60px]"],
    ["Run", "w-[39px]"],
    ["Window", "w-[69px]"],
    ["Help", "w-[50px]"],
  ];
  return (
    <div className="w-[1920px] h-[1030px] bg-[#f0f0f0] overflow-hidden flex flex-col font-['Open_Sans',sans-serif] text-[14.3px] text-[#111]">
      <div className="h-[29px] shrink-0 bg-white flex items-center pl-[3px]">
        <Logo />
        <span className="ml-[4px] whitespace-nowrap">ws - LightSwitch/model/LightSwitch.ysc - YAKINDU SCT Professional Edition</span>
        <div className="ml-auto flex items-center">
          <svg width="12" height="2" className="mr-[47px]"><rect width="12" height="1" fill="#000" /></svg>
          <svg width="12" height="12" viewBox="0 0 12 12" fill="#fff" stroke="#000" className="mr-[47px]"><rect x="3.5" y=".5" width="8" height="8" /><rect x=".5" y="3.5" width="8" height="8" /></svg>
          <svg width="13" height="13" viewBox="0 0 13 13" stroke="#000" className="mr-[25px]"><path d="M.5 .5 L12.5 12.5 M12.5 .5 L.5 12.5" /></svg>
        </div>
      </div>
      <div className="h-[23px] shrink-0 bg-white flex items-center pt-[2px]">
        {menus.map(([m, w]) => (
          <span key={m} className={"whitespace-nowrap " + w}><u className="decoration-1 underline-offset-2">{m[0]}</u>{m.slice(1)}</span>
        ))}
      </div>
      <Toolbar />
      <div className="h-[920px] shrink-0 flex">
        <ProjectExplorer />
        <div className="w-[1443px] ml-[5px] shrink-0 flex flex-col">
          <EditorPanel />
          <ProblemsPanel />
        </div>
        <div className="ml-[6px] flex-1 h-full flex min-w-0">
          <OutlinePanel />
        </div>
      </div>
      <div className="flex-1 flex items-center pl-[1564px]">
        <div className="w-[2px] h-[14px] border-l-2 border-dotted border-[#c4c4c4]" />
      </div>
    </div>
  );
}
